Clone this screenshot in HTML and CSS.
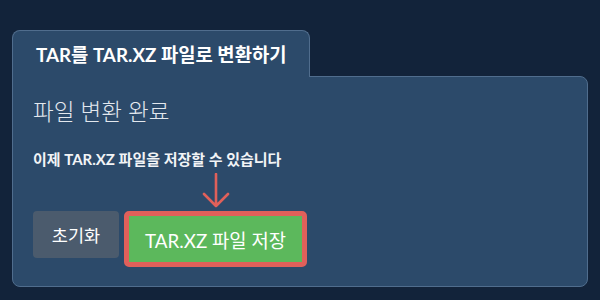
FILE: index.html
```html
<!DOCTYPE html>
<html lang="ko">
<head>
<meta charset="utf-8">
<link rel="stylesheet" href="styles.css">
</head>
<body>
<div class="card">
  <div class="tab"><h1 class="tab-title">TAR를 TAR.XZ 파일로 변환하기</h1></div>
  <div class="panel">
    <h2 class="status">파일 변환 완료</h2>
    <p class="note">이제 TAR.XZ 파일을 저장할 수 있습니다</p>
    <div class="actions">
      <button class="btn btn-reset">초기화</button>
      <div class="save-wrap">
        <svg class="pointer" width="30" height="36" viewBox="0 0 30 36" aria-hidden="true">
          <path d="M15 1 V33 M3 21 L15 33 L27 21" fill="none" stroke="#e0605a" stroke-width="2.6" stroke-linecap="round" stroke-linejoin="round"/>
        </svg>
        <button class="btn btn-save">TAR.XZ 파일 저장</button>
      </div>
    </div>
  </div>
</div>
</body>
</html>
```
FILE: styles.css
```css
html, body {
  margin: 0;
  padding: 0;
}
body {
  background: #12233a;
  font-family: Lato, "Noto Sans CJK KR", sans-serif;
  color: #fff;
  width: 600px;
  height: 300px;
  overflow: hidden;
}
.card {
  padding: 30px 12px 0 12px;
  display: flex;
  flex-direction: column;
  align-items: flex-start;
}
.tab {
  position: relative;
  z-index: 1;
  background: #2c4a6a;
  border: 1px solid #506d8d;
  border-bottom: none;
  border-radius: 8px 8px 0 0;
  height: 46px;
  padding: 0 23px;
  display: flex;
  align-items: center;
  margin-bottom: -1px;
}
.tab-title {
  margin: 0;
  font-size: 18.8px;
  font-weight: 700;
  color: #fff;
  line-height: 24px;
  padding-top: 2px;
}
.panel {
  align-self: stretch;
  background: #2c4a6a;
  border: 1px solid #506d8d;
  border-radius: 0 8px 8px 8px;
  height: 211px;
  padding: 20px 20px 0 20px;
  box-sizing: border-box;
}
.status {
  margin: 0;
  font-size: 22.5px;
  font-weight: 300;
  line-height: 30px;
  color: #e3e8ee;
}
.note {
  margin: 22px 0 0 0;
  font-size: 15px;
  font-weight: 700;
  line-height: 20px;
  color: #f2f4f6;
}
.actions {
  margin-top: 42px;
  display: flex;
  align-items: flex-start;
  gap: 5px;
}
.btn {
  font-family: Lato, "Noto Sans CJK KR", sans-serif;
  color: #fff;
  border: none;
  border-radius: 4px;
  margin: 0;
  padding: 0;
}
.btn-reset {
  background: #4b5b6d;
  height: 47px;
  width: 86px;
  font-size: 17.5px;
}
.save-wrap {
  position: relative;
}
.pointer {
  position: absolute;
  left: 50%;
  margin-left: -15px;
  top: -38px;
}
.btn-save {
  background: #5cb85c;
  border: 5px solid #e0605a;
  height: 56px;
  width: 183px;
  font-size: 18.8px;
  border-radius: 5px;
}
```
